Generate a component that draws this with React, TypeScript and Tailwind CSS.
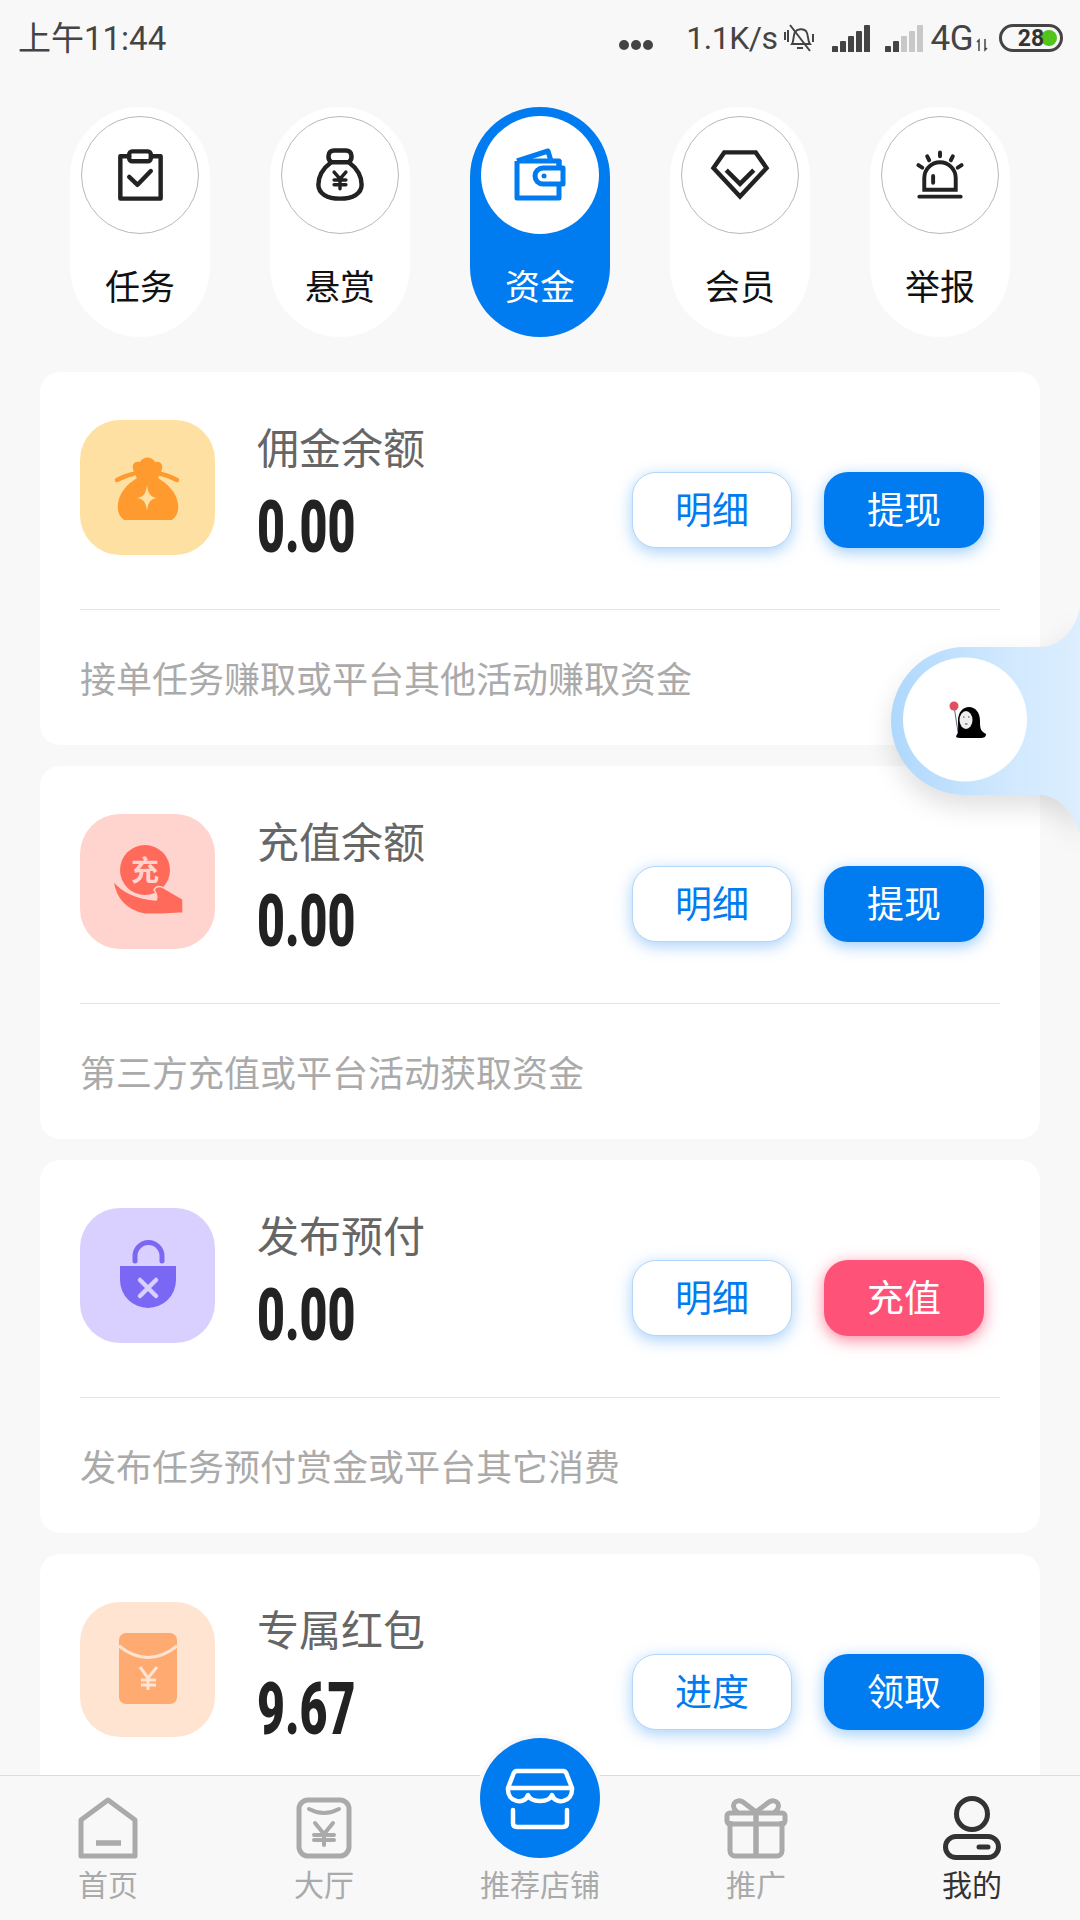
import React from 'react';

const BLUE = '#007cf0';

function TaskIcon() {
  return (
    <svg viewBox="0 0 118 118" className="h-full w-full" fill="none" stroke="#222" strokeWidth="4.5" strokeLinecap="round" strokeLinejoin="round">
      <path d="M48 40h-9v43h41V40h-9" />
      <rect x="48" y="35" width="22" height="10" rx="3" />
      <path d="M48 61l8.500 8L70 55" />
    </svg>
  );
}

function BagIcon() {
  return (
    <svg viewBox="0 0 118 118" className="h-full w-full" fill="none" stroke="#222" strokeWidth="4.500" strokeLinecap="round" strokeLinejoin="round">
      <path d="M50 46C42 52 37 60 37 69c0 9 9 14 22 14s22-5 22-14c0-9-5-17-13-23Z" />
      <path d="M50 46c-4-3-4-12 3-12h12c7 0 7 9 3 12" />
      <path d="M53 56l6 7 6-7M59 63v10M53 64h12M53 69h12" strokeWidth="3.500" />
    </svg>
  );
}

function WalletIcon() {
  return (
    <svg viewBox="0 0 118 118" className="h-full w-full" fill="none" stroke={BLUE} strokeWidth="5" strokeLinejoin="round">
      <path d="M36 45h42v8M78 67v15H36V45" />
      <path d="M36 45l31-10 3 10" />
      <path d="M78 44v7" />
      <path d="M82 52H62a8 8 0 0 0 0 16h20Z" />
      <circle cx="63" cy="60" r="2.500" fill={BLUE} stroke="none" />
    </svg>
  );
}

function DiamondIcon() {
  return (
    <svg viewBox="0 0 118 118" className="h-full w-full" fill="none" stroke="#222" strokeWidth="4.500" strokeLinejoin="miter">
      <path d="M32 52l11-16h32l11 16-27 29Z" />
      <path d="M45 54l14 14 14-14" />
    </svg>
  );
}

function AlarmIcon() {
  return (
    <svg viewBox="0 0 118 118" className="h-full w-full" fill="none" stroke="#222" strokeWidth="4" strokeLinecap="round">
      <path d="M43 74V62a16 16 0 0 1 32 0v12Z" />
      <path d="M38 81h42" />
      <path d="M52 60v7" />
      <path d="M59 36v4M46 40l2 4M72 40l-2 4M37 49l4 2.500M81 49l-4 2.500" />
    </svg>
  );
}

const tabs = [
  { name: '任务', icon: <TaskIcon />, active: false },
  { name: '悬赏', icon: <BagIcon />, active: false },
  { name: '资金', icon: <WalletIcon />, active: true },
  { name: '会员', icon: <DiamondIcon />, active: false },
  { name: '举报', icon: <AlarmIcon />, active: false },
];

function PurseGlyph() {
  return (
    <svg viewBox="0 0 135 135" className="h-full w-full">
      <path d="M44 100C39 96 37 91 38 84c1-11 9-20 19-26h21c10 6 19 15 20 26 1 7-1 12-6 16Z" fill="#ff9a2e" />
      <path d="M57 58c-3-5-5-10-4-13 1-3 4-4 7-3 3-6 12-6 15 0 3-1 6 0 7 3 1 3-1 8-4 13Z" fill="#ff9a2e" />
      <path d="M37 60c6-3 11-5 16-6M97 60c-6-3-11-5-16-6" stroke="#ff9a2e" strokeWidth="4.500" strokeLinecap="round" fill="none" />
      <path d="M67 65c1 8 3 12 10 13-7 1-9 5-10 13-1-8-3-12-10-13 7-1 9-5 10-13Z" fill="#ffe0a3" />
    </svg>
  );
}

function HandGlyph() {
  return (
    <svg viewBox="0 0 135 135" className="h-full w-full">
      <circle cx="65" cy="56" r="25" fill="#ff6a5a" />
      <text x="65" y="67" textAnchor="middle" fontSize="28" fontWeight="700" fill="#ffd4cf">充</text>
      <path d="M33 66c9 12 25 19 43 20 2-2 0-8-2-10 2-4 6-4 10-2l19 11v14c-13 1-28 2-39 1C47 97 35 85 33 66Z" fill="#ff6a5a" stroke="#ffd4cf" strokeWidth="1.500" />
    </svg>
  );
}

function LockGlyph() {
  return (
    <svg viewBox="0 0 135 135" className="h-full w-full">
      <path d="M55 53V48a13.500 13.500 0 0 1 27 0v5" fill="none" stroke="#7a68f5" strokeWidth="5" strokeLinecap="round" />
      <path d="M40 58h56v14a28 28 0 0 1-56 0Z" fill="#7a68f5" />
      <path d="M60 72l16 16M76 72L60 88" stroke="#d9d0ff" strokeWidth="4.500" strokeLinecap="round" />
    </svg>
  );
}

function EnvelopeGlyph() {
  return (
    <svg viewBox="0 0 135 135" className="h-full w-full">
      <rect x="39" y="31" width="58" height="71" rx="7" fill="#ffaa70" />
      <path d="M39 44Q68 67 97 44" fill="none" stroke="#ffe4d2" strokeWidth="3" />
      <path d="M60 65l8 11 9-11M68 76v12M61 78h15M61 83h15" fill="none" stroke="#ffe4d2" strokeWidth="3" />
    </svg>
  );
}

const funds = [
  {
    title: '佣金余额',
    amount: '0.00',
    note: '接单任务赚取或平台其他活动赚取资金',
    tile: 'bg-[#ffe0a3]',
    glyph: <PurseGlyph />,
    left: '明细',
    right: '提现',
    rightClass: 'bg-[#007cf0] shadow-[0_4px_16px_rgba(0,124,240,0.4)]',
  },
  {
    title: '充值余额',
    amount: '0.00',
    note: '第三方充值或平台活动获取资金',
    tile: 'bg-[#ffd4cf]',
    glyph: <HandGlyph />,
    left: '明细',
    right: '提现',
    rightClass: 'bg-[#007cf0] shadow-[0_4px_16px_rgba(0,124,240,0.4)]',
  },
  {
    title: '发布预付',
    amount: '0.00',
    note: '发布任务预付赏金或平台其它消费',
    tile: 'bg-[#d9d0ff]',
    glyph: <LockGlyph />,
    left: '明细',
    right: '充值',
    rightClass: 'bg-[#ff5278] shadow-[0_4px_16px_rgba(255,82,120,0.7)]',
  },
  {
    title: '专属红包',
    amount: '9.67',
    note: '',
    tile: 'bg-[#ffe4d2]',
    glyph: <EnvelopeGlyph />,
    left: '进度',
    right: '领取',
    rightClass: 'bg-[#007cf0] shadow-[0_4px_16px_rgba(0,124,240,0.4)]',
  },
];

function StatusBar() {
  const bars = [6, 11, 16, 21, 27];
  return (
    <div className="relative h-[107px] flex-none text-[#444]">
      <div className="flex h-[76px] items-center pl-[18px] pr-[17px]">
        <span className="text-[33px] leading-none">上午11:44</span>
        <div className="ml-auto flex items-center">
          <div className="mt-[14px] flex gap-[2px]">
            <i className="h-[10px] w-[10px] rounded-full bg-[#444]" />
            <i className="h-[10px] w-[10px] rounded-full bg-[#444]" />
            <i className="h-[10px] w-[10px] rounded-full bg-[#444]" />
          </div>
          <span className="ml-[33px] text-[32px] leading-none tracking-[-0.5px]">1.1K/s</span>
          <svg viewBox="0 0 34 32" className="ml-[6px] h-[32px] w-[34px]" fill="none" stroke="#444" strokeWidth="2">
            <path d="M9 22c2-3 1-8 3-12 2-3 8-4 11-1 3 4 1 9 4 13Z" />
            <path d="M14 26h6M7 3l20 26M2 10v8M5 8v12M30 12v8" />
          </svg>
          <div className="ml-[15px] flex h-[27px] items-end gap-[2px]">
            {bars.map((h) => (
              <i key={h} className="w-[6px] rounded-t-[1px] bg-[#444]" style={{ height: h }} />
            ))}
          </div>
          <div className="ml-[15px] flex h-[27px] items-end gap-[2px]">
            {bars.map((h, i) => (
              <i key={h} className={`w-[6px] rounded-t-[1px] ${i < 2 ? 'bg-[#444]' : 'bg-[#c8c8c8]'}`} style={{ height: h }} />
            ))}
          </div>
          <span className="ml-[7px] text-[35px] leading-none tracking-[-0.5px]">4G</span>
          <svg viewBox="0 0 12 14" className="ml-[3px] mt-[14px] h-[14px] w-[12px]" fill="none" stroke="#444" strokeWidth="1.500">
            <path d="M3 13V2L1 4M9 1v11l2-2" />
          </svg>
          <div className="relative ml-[11px] flex h-[28px] w-[64px] items-center justify-center rounded-[14px] border-[3px] border-[#444]">
            <span className="absolute right-[3px] top-[3px] h-[16px] w-[16px] rounded-full bg-[#52c41a]" />
            <span className="relative text-[23px] font-bold leading-none text-[#333]">28</span>
          </div>
        </div>
      </div>
    </div>
  );
}

function TabRow() {
  return (
    <div className="flex h-[265px] flex-none justify-center gap-[60px]">
      {tabs.map((tab) => (
        <div
          key={tab.name}
          className={`flex h-[230px] w-[140px] flex-col items-center rounded-[70px] pt-[9px] ${tab.active ? 'bg-[#007cf0]' : 'bg-white'}`}
        >
          <div className={`h-[118px] w-[118px] rounded-full bg-white ${tab.active ? '' : 'border border-[#b8b8b8]'}`}>{tab.icon}</div>
          <span className={`mt-[30px] text-[35px] leading-[50px] ${tab.active ? 'text-white' : 'text-[#111]'}`}>{tab.name}</span>
        </div>
      ))}
    </div>
  );
}

function FundCard({ fund }: { fund: (typeof funds)[number] }) {
  return (
    <section className="h-[373px] flex-none rounded-[20px] bg-white px-[40px] pt-[48px]">
      <div className="flex h-[190px] items-start border-b border-[#e4e4e4]">
        <div className={`h-[135px] w-[135px] flex-none rounded-[40px] ${fund.tile}`}>{fund.glyph}</div>
        <div className="ml-[42px] flex flex-col">
          <span className="text-[42px] leading-[60px] text-[#666]">{fund.title}</span>
          <span className="mt-[12px] origin-left scale-x-[0.67] text-[72px] font-black leading-[72px] text-[#222]">{fund.amount}</span>
        </div>
        <div className="ml-auto mr-[16px] mt-[52px] flex gap-[32px]">
          <button className="h-[76px] w-[160px] rounded-[24px] border border-[#b4d6f7] bg-white pt-[4px] text-[37px] text-[#007cf0] shadow-[0_4px_16px_rgba(0,124,240,0.35)]">
            {fund.left}
          </button>
          <button className={`h-[76px] w-[160px] rounded-[24px] pt-[4px] text-[37px] text-white ${fund.rightClass}`}>{fund.right}</button>
        </div>
      </div>
      <p className="mt-[46px] text-[36px] leading-[50px] text-[#aaa]">{fund.note}</p>
    </section>
  );
}

function FloatingHelper() {
  return (
    <svg viewBox="0 0 200 240" className="absolute left-[880px] top-[600px] h-[240px] w-[200px] drop-shadow-[0_12px_12px_rgba(0,0,0,0.12)]">
      <defs>
        <linearGradient id="helperFill" x1="0" x2="1" y1="0" y2="0">
          <stop offset="0" stopColor="#aed8fd" />
          <stop offset="0.6" stopColor="#d0e8fe" />
          <stop offset="1" stopColor="#dceeff" />
        </linearGradient>
      </defs>
      <path d="M200 8C195 30 180 47 160 47H85A74 74 0 0 0 85 195H160C180 195 195 215 200 233Z" fill="url(#helperFill)" />
      <circle cx="85" cy="119.500" r="62" fill="#fff" />
      <path d="M74 106l4 26" stroke="#5a6a7a" strokeWidth="1" />
      <circle cx="74" cy="106" r="4.500" fill="#e0505e" />
      <path d="M76 136c3-3 2-8 2-15 0-9 5-14 11-14s11 5 11 14c0 6 0 10 6 13 0 3-2 4-6 4H80c-3 0-4-1-4-2Z" fill="#000" />
      <ellipse cx="86" cy="120" rx="6.500" ry="9" fill="#eee" />
      <path d="M83 117h1.500M88 117h1.500M85 124h2.500" stroke="#444" strokeWidth="1.200" />
    </svg>
  );
}

function Yen({ x, y }: { x: number; y: number }) {
  return <path transform={`translate(${x} ${y})`} d="M-9-8L0 3 9-8M0 3V14M-10 4H10M-10 9H10" />;
}

function NavItem({ label, active, children }: { label: string; active?: boolean; children?: React.ReactNode }) {
  return (
    <div className="flex flex-1 flex-col items-center pt-[20px]">
      <div className="flex h-[64px] items-center justify-center">{children}</div>
      <span className={`mt-[6px] text-[30px] leading-[40px] ${active ? 'text-[#333]' : 'text-[#aaa]'}`}>{label}</span>
    </div>
  );
}

function BottomNav() {
  return (
    <nav className="relative flex h-[145px] flex-none border-t border-[#dcdcdc] bg-[#f8f8f8]">
      <NavItem label="首页">
        <svg viewBox="0 0 60 62" className="h-[62px] w-[60px]" fill="none" stroke="#aaa" strokeWidth="5" strokeLinejoin="round">
          <path d="M30 3L57 23V59H3V23Z" />
          <path d="M18 46H43" strokeWidth="5.500" />
        </svg>
      </NavItem>
      <NavItem label="大厅">
        <svg viewBox="0 0 56 62" className="h-[62px] w-[56px]" fill="none" stroke="#aaa" strokeWidth="5" strokeLinecap="round">
          <rect x="3" y="3" width="50" height="56" rx="9" />
          <path d="M13 12Q28 20 43 12" strokeWidth="4" />
          <g strokeWidth="4"><Yen x={28} y={34} /></g>
        </svg>
      </NavItem>
      <NavItem label="推荐店铺" />
      <NavItem label="推广">
        <svg viewBox="0 0 64 62" className="h-[62px] w-[64px]" fill="none" stroke="#aaa" strokeWidth="5" strokeLinejoin="round">
          <path d="M6 24V54a5 5 0 0 0 5 5H53a5 5 0 0 0 5-5V24" />
          <rect x="3" y="16" width="58" height="11" rx="3" />
          <path d="M32 15V59" strokeWidth="5.500" />
          <path d="M32 15L19 5C12 1 6 8 12 14L14 16M32 15L45 5C52 1 58 8 52 14L50 16" />
        </svg>
      </NavItem>
      <NavItem label="我的" active>
        <svg viewBox="0 0 58 64" className="h-[64px] w-[58px]" fill="none" stroke="#333" strokeWidth="5">
          <circle cx="29" cy="18" r="15.500" />
          <rect x="2.500" y="40.500" width="53" height="21" rx="10.500" />
          <path d="M36 51H45" strokeWidth="5" strokeLinecap="round" />
        </svg>
      </NavItem>
      <div className="absolute left-[476px] top-[-42px] h-[128px] w-[128px] rounded-full bg-[#f8f8f8] p-[4px]">
        <svg viewBox="0 0 120 120" className="h-[120px] w-[120px]" fill="none" stroke="#fff" strokeWidth="4.500" strokeLinejoin="round" strokeLinecap="round">
          <circle cx="60" cy="60" r="60" fill={BLUE} stroke="none" />
          <path d="M37 33H83Q86 33 87 37L92 50C93 65 75 67 72 57 69 65 51 65 48 57 45 67 27 65 28 50L33 37Q34 33 37 33Z" />
          <path d="M31 50H89" />
          <path d="M33 72V85Q33 89 37 89H83Q87 89 87 85V72" />
        </svg>
      </div>
    </nav>
  );
}

export default function App() {
  return (
    <div className="relative flex h-[1920px] w-[1080px] flex-col overflow-hidden bg-[#f8f8f8] [font-family:Roboto,'Noto_Sans_CJK_SC',sans-serif]">
      <StatusBar />
      <TabRow />
      <main className="flex min-h-0 flex-1 flex-col gap-[21px] overflow-hidden px-[40px]">
        {funds.map((fund) => (
          <FundCard key={fund.title} fund={fund} />
        ))}
      </main>
      <BottomNav />
      <FloatingHelper />
    </div>
  );
}
